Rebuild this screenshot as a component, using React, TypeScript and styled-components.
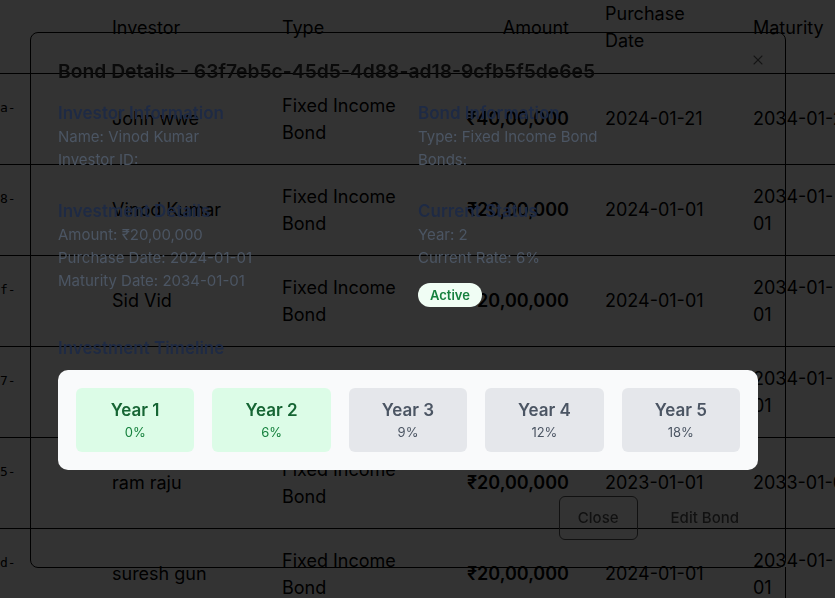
import React from 'react';
import styled, { createGlobalStyle } from 'styled-components';
import { X } from 'lucide-react';

const GlobalStyle = createGlobalStyle`
  html, body {
    margin: 0;
    padding: 0;
    overflow: hidden;
    background: #ffffff;
    font-family: Inter, "Noto Sans", sans-serif;
  }
`;

const Page = styled.div`
  width: 835px;
  height: 598px;
  overflow: hidden;
`;

const Table = styled.table`
  table-layout: fixed;
  width: 900px;
  margin-top: -18px;
  border-collapse: collapse;
  font-size: 18px;
  line-height: 27px;
  color: #000;
`;

const Row = styled.tr`
  height: 91px;
  border-bottom: 1px solid #000;
`;

const HeadCell = styled.th<{ $align?: 'left' | 'right' }>`
  font-weight: 400;
  text-align: ${(p) => p.$align || 'left'};
  vertical-align: middle;
  padding: 0 ${(p) => (p.$align === 'right' ? '20px' : '16px')} 0 16px;
`;

const Cell = styled.td<{ $align?: 'left' | 'right'; $bold?: boolean }>`
  text-align: ${(p) => p.$align || 'left'};
  font-weight: ${(p) => (p.$bold ? 600 : 400)};
  vertical-align: middle;
  padding: 0 ${(p) => (p.$align === 'right' ? '20px' : '16px')} 0 16px;
  white-space: pre;
`;

const IdCell = styled.td`
  font-family: "DejaVu Sans Mono", monospace;
  font-size: 13px;
  vertical-align: middle;
  padding: 0 0 22px 0;
`;

const TypeCell = styled(Cell)`
  white-space: normal;
`;

const Overlay = styled.div`
  position: fixed;
  inset: 0;
  background: rgba(0, 0, 0, 0.8);
  display: flex;
  align-items: center;
  justify-content: center;
  padding: 1px 19px 0 0;
`;

const Modal = styled.div`
  position: relative;
  width: 756px;
  box-sizing: border-box;
  border: 1px solid #000;
  border-radius: 8px;
  padding: 24px 27px 27px;
  background: transparent;

  &::after {
    content: '';
    position: absolute;
    right: -1px;
    top: 100%;
    width: 1px;
    height: 60px;
    background: #000;
  }
`;

const CloseIcon = styled.button`
  position: absolute;
  top: 19px;
  right: 19px;
  background: none;
  border: none;
  padding: 0;
  display: flex;
  color: #151515;
  cursor: pointer;
`;

const Title = styled.h2`
  margin: 0;
  font-size: 19.3px;
  line-height: 28px;
  font-weight: 600;
  color: #0a0a0a;
`;

const InfoGrid = styled.div`
  display: grid;
  grid-template-columns: 1fr 1fr;
  column-gap: 20px;
  row-gap: 28px;
  margin-top: 16px;
`;

const Section = styled.div`
  display: flex;
  flex-direction: column;
  align-items: flex-start;
`;

const SectionTitle = styled.h3`
  margin: 0;
  font-size: 17px;
  line-height: 24px;
  font-weight: 600;
  color: #1e2a44;
`;

const Line = styled.p`
  margin: 0;
  font-size: 15px;
  line-height: 23px;
  color: #4b5563;
`;

const Badge = styled.span`
  margin-top: 14px;
  height: 24px;
  display: inline-flex;
  align-items: center;
  padding: 0 12px;
  border-radius: 999px;
  background: #f0fdf4;
  color: #15803d;
  font-size: 13px;
  font-weight: 600;
`;

const TimelineTitle = styled(SectionTitle)`
  margin-top: 29px;
`;

const TimelineCard = styled.div`
  margin-top: 10px;
  background: #f9fafb;
  border-radius: 10px;
  padding: 18px;
  display: grid;
  grid-template-columns: repeat(5, 1fr);
  gap: 18px;
`;

const YearBox = styled.div<{ $done: boolean }>`
  background: ${(p) => (p.$done ? '#dcfce7' : '#e5e7eb')};
  border-radius: 6px;
  padding: 10px 0;
  text-align: center;
  display: flex;
  flex-direction: column;
`;

const YearLabel = styled.span<{ $done: boolean }>`
  font-size: 17px;
  line-height: 24px;
  font-weight: 600;
  color: ${(p) => (p.$done ? '#166534' : '#4b5563')};
`;

const YearRate = styled.span<{ $done: boolean }>`
  font-size: 13px;
  line-height: 20px;
  color: ${(p) => (p.$done ? '#15803d' : '#4b5563')};
`;

const Footer = styled.div`
  margin-top: 26px;
  display: flex;
  justify-content: flex-end;
  gap: 14px;
`;

const Button = styled.button<{ $outline?: boolean }>`
  height: 44px;
  padding: 0 18px;
  border-radius: 6px;
  border: 1px solid ${(p) => (p.$outline ? '#111' : 'transparent')};
  background: transparent;
  font-family: Inter, sans-serif;
  font-size: 15px;
  font-weight: 500;
  color: #111;
`;

const rows = [
  { id: 'a-', name: 'John wwe', amount: '₹40,00,000', purchase: '2024-01-21', maturity: '2034-01-21' },
  { id: '8-', name: 'Vinod Kumar', amount: '₹20,00,000', purchase: '2024-01-01', maturity: '2034-01-\n01' },
  { id: 'f-', name: 'Sid Vid', amount: '₹20,00,000', purchase: '2024-01-01', maturity: '2034-01-\n01' },
  { id: '7-', name: 'Anil Mehta', amount: '₹20,00,000', purchase: '2024-01-01', maturity: '2034-01-\n01' },
  { id: '5-', name: 'ram raju', amount: '₹20,00,000', purchase: '2023-01-01', maturity: '2033-01-01' },
  { id: 'd-', name: 'suresh gun', amount: '₹20,00,000', purchase: '2024-01-01', maturity: '2034-01-\n01' },
];

const years = [
  { label: 'Year 1', rate: '0%', done: true },
  { label: 'Year 2', rate: '6%', done: true },
  { label: 'Year 3', rate: '9%', done: false },
  { label: 'Year 4', rate: '12%', done: false },
  { label: 'Year 5', rate: '18%', done: false },
];

export default function App() {
  return (
    <>
      <GlobalStyle />
      <Page>
        <Table>
          <colgroup>
            <col style={{ width: 96 }} />
            <col style={{ width: 170 }} />
            <col style={{ width: 154 }} />
            <col style={{ width: 169 }} />
            <col style={{ width: 148 }} />
            <col style={{ width: 163 }} />
          </colgroup>
          <thead>
            <Row>
              <HeadCell />
              <HeadCell>Investor</HeadCell>
              <HeadCell>Type</HeadCell>
              <HeadCell $align="right">Amount</HeadCell>
              <HeadCell>Purchase Date</HeadCell>
              <HeadCell>Maturity</HeadCell>
            </Row>
          </thead>
          <tbody>
            {rows.map((r) => (
              <Row key={r.id}>
                <IdCell>{r.id}</IdCell>
                <Cell>{r.name}</Cell>
                <TypeCell>Fixed Income Bond</TypeCell>
                <Cell $align="right" $bold>{r.amount}</Cell>
                <Cell>{r.purchase}</Cell>
                <Cell>{r.maturity}</Cell>
              </Row>
            ))}
          </tbody>
        </Table>
      </Page>
      <Overlay>
        <Modal>
          <CloseIcon aria-label="Close">
            <X size={16} strokeWidth={1.6} />
          </CloseIcon>
          <Title>Bond Details - 63f7eb5c-45d5-4d88-ad18-9cfb5f5de6e5</Title>
          <InfoGrid>
            <Section>
              <SectionTitle>Investor Information</SectionTitle>
              <Line>Name: Vinod Kumar</Line>
              <Line>Investor ID: </Line>
            </Section>
            <Section>
              <SectionTitle>Bond Information</SectionTitle>
              <Line>Type: Fixed Income Bond</Line>
              <Line>Bonds: </Line>
            </Section>
            <Section>
              <SectionTitle>Investment Details</SectionTitle>
              <Line>Amount: ₹20,00,000</Line>
              <Line>Purchase Date: 2024-01-01</Line>
              <Line>Maturity Date: 2034-01-01</Line>
            </Section>
            <Section>
              <SectionTitle>Current Status</SectionTitle>
              <Line>Year: 2</Line>
              <Line>Current Rate: 6%</Line>
              <Badge>Active</Badge>
            </Section>
          </InfoGrid>
          <TimelineTitle>Investment Timeline</TimelineTitle>
          <TimelineCard>
            {years.map((y) => (
              <YearBox key={y.label} $done={y.done}>
                <YearLabel $done={y.done}>{y.label}</YearLabel>
                <YearRate $done={y.done}>{y.rate}</YearRate>
              </YearBox>
            ))}
          </TimelineCard>
          <Footer>
            <Button $outline>Close</Button>
            <Button>Edit Bond</Button>
          </Footer>
        </Modal>
      </Overlay>
    </>
  );
}
